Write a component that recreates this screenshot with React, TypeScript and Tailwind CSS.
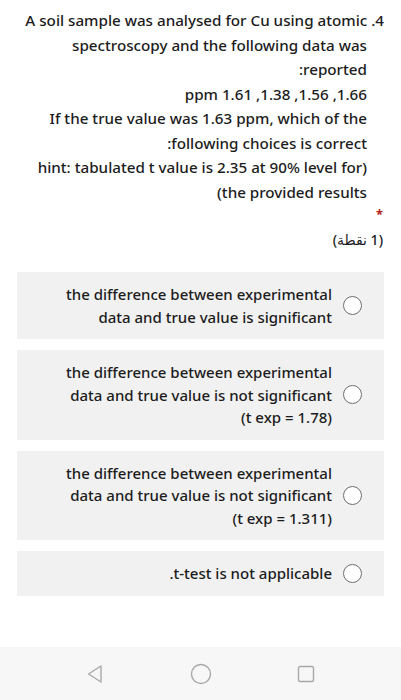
import React from 'react';

const questionLines = [
  'spectroscopy and the following data was',
  ':reported',
  'ppm 1.61 ,1.38 ,1.56 ,1.66',
  'If the true value was 1.63 ppm, which of the',
  ':following choices is correct',
  'hint: tabulated t value is 2.35 at 90% level for)',
  '(the provided results',
];

const options: string[][] = [
  ['the difference between experimental', 'data and true value is significant'],
  ['the difference between experimental', 'data and true value is not significant', '(t exp = 1.78)'],
  ['the difference between experimental', 'data and true value is not significant', '(t exp = 1.311)'],
  ['.t-test is not applicable'],
];

function Radio() {
  return <span className="shrink-0 w-[19px] h-[19px] rounded-full border-[1.5px] border-[#6e6e6e] bg-white" />;
}

export default function App() {
  return (
    <div
      className="w-full h-[700px] bg-white flex flex-col text-[#1c1c1c]"
      style={{ fontFamily: '"Noto Sans", "DejaVu Sans", sans-serif' }}
    >
      {/* Question */}
      <div className="pt-[8px] text-[15.2px] leading-[24.5px] text-right font-medium">
        <div className="pr-[17px] whitespace-nowrap">A soil sample was analysed for Cu using atomic .4</div>
        {questionLines.map((line, i) => (
          <div key={i} className="pr-[34px] whitespace-nowrap">
            {line}
          </div>
        ))}
      </div>

      <div className="h-[20px] leading-[20px] pr-[18px] text-right text-[#b3261e] text-[13px] font-bold">*</div>
      <div dir="rtl" className="mt-[4px] pr-[18px] text-[14px] leading-[24px] text-right font-medium">
        (1 نقطة)
      </div>

      {/* Choices */}
      <div className="mt-[20px] mx-[17px] flex flex-col gap-[11px]">
        {options.map((lines, i) => (
          <div key={i} className="bg-[#f1f1f1] py-[11px] pr-[22px] flex items-center justify-end gap-[11px]">
            <div className="text-right text-[15px] leading-[22.5px] font-medium">
              {lines.map((l, j) => (
                <div key={j} className="whitespace-nowrap">
                  {l}
                </div>
              ))}
            </div>
            <Radio />
          </div>
        ))}
      </div>

      {/* Android nav bar */}
      <div className="mt-auto h-[53px] bg-[#f7f7f7] flex items-center">
        <div className="w-full flex items-center justify-between px-[86px]">
          <svg width="18" height="20" viewBox="0 0 18 20" fill="none">
            <path d="M15 2 L2.5 10 L15 18 Z" stroke="#a9a9a9" strokeWidth="1.4" strokeLinejoin="round" />
          </svg>
          <svg width="22" height="22" viewBox="0 0 22 22" fill="none">
            <circle cx="11" cy="11" r="9.5" stroke="#a9a9a9" strokeWidth="1.4" />
          </svg>
          <svg width="18" height="18" viewBox="0 0 18 18" fill="none">
            <rect x="1.5" y="1.5" width="15" height="15" rx="1.5" stroke="#a9a9a9" strokeWidth="1.4" />
          </svg>
        </div>
      </div>
    </div>
  );
}
